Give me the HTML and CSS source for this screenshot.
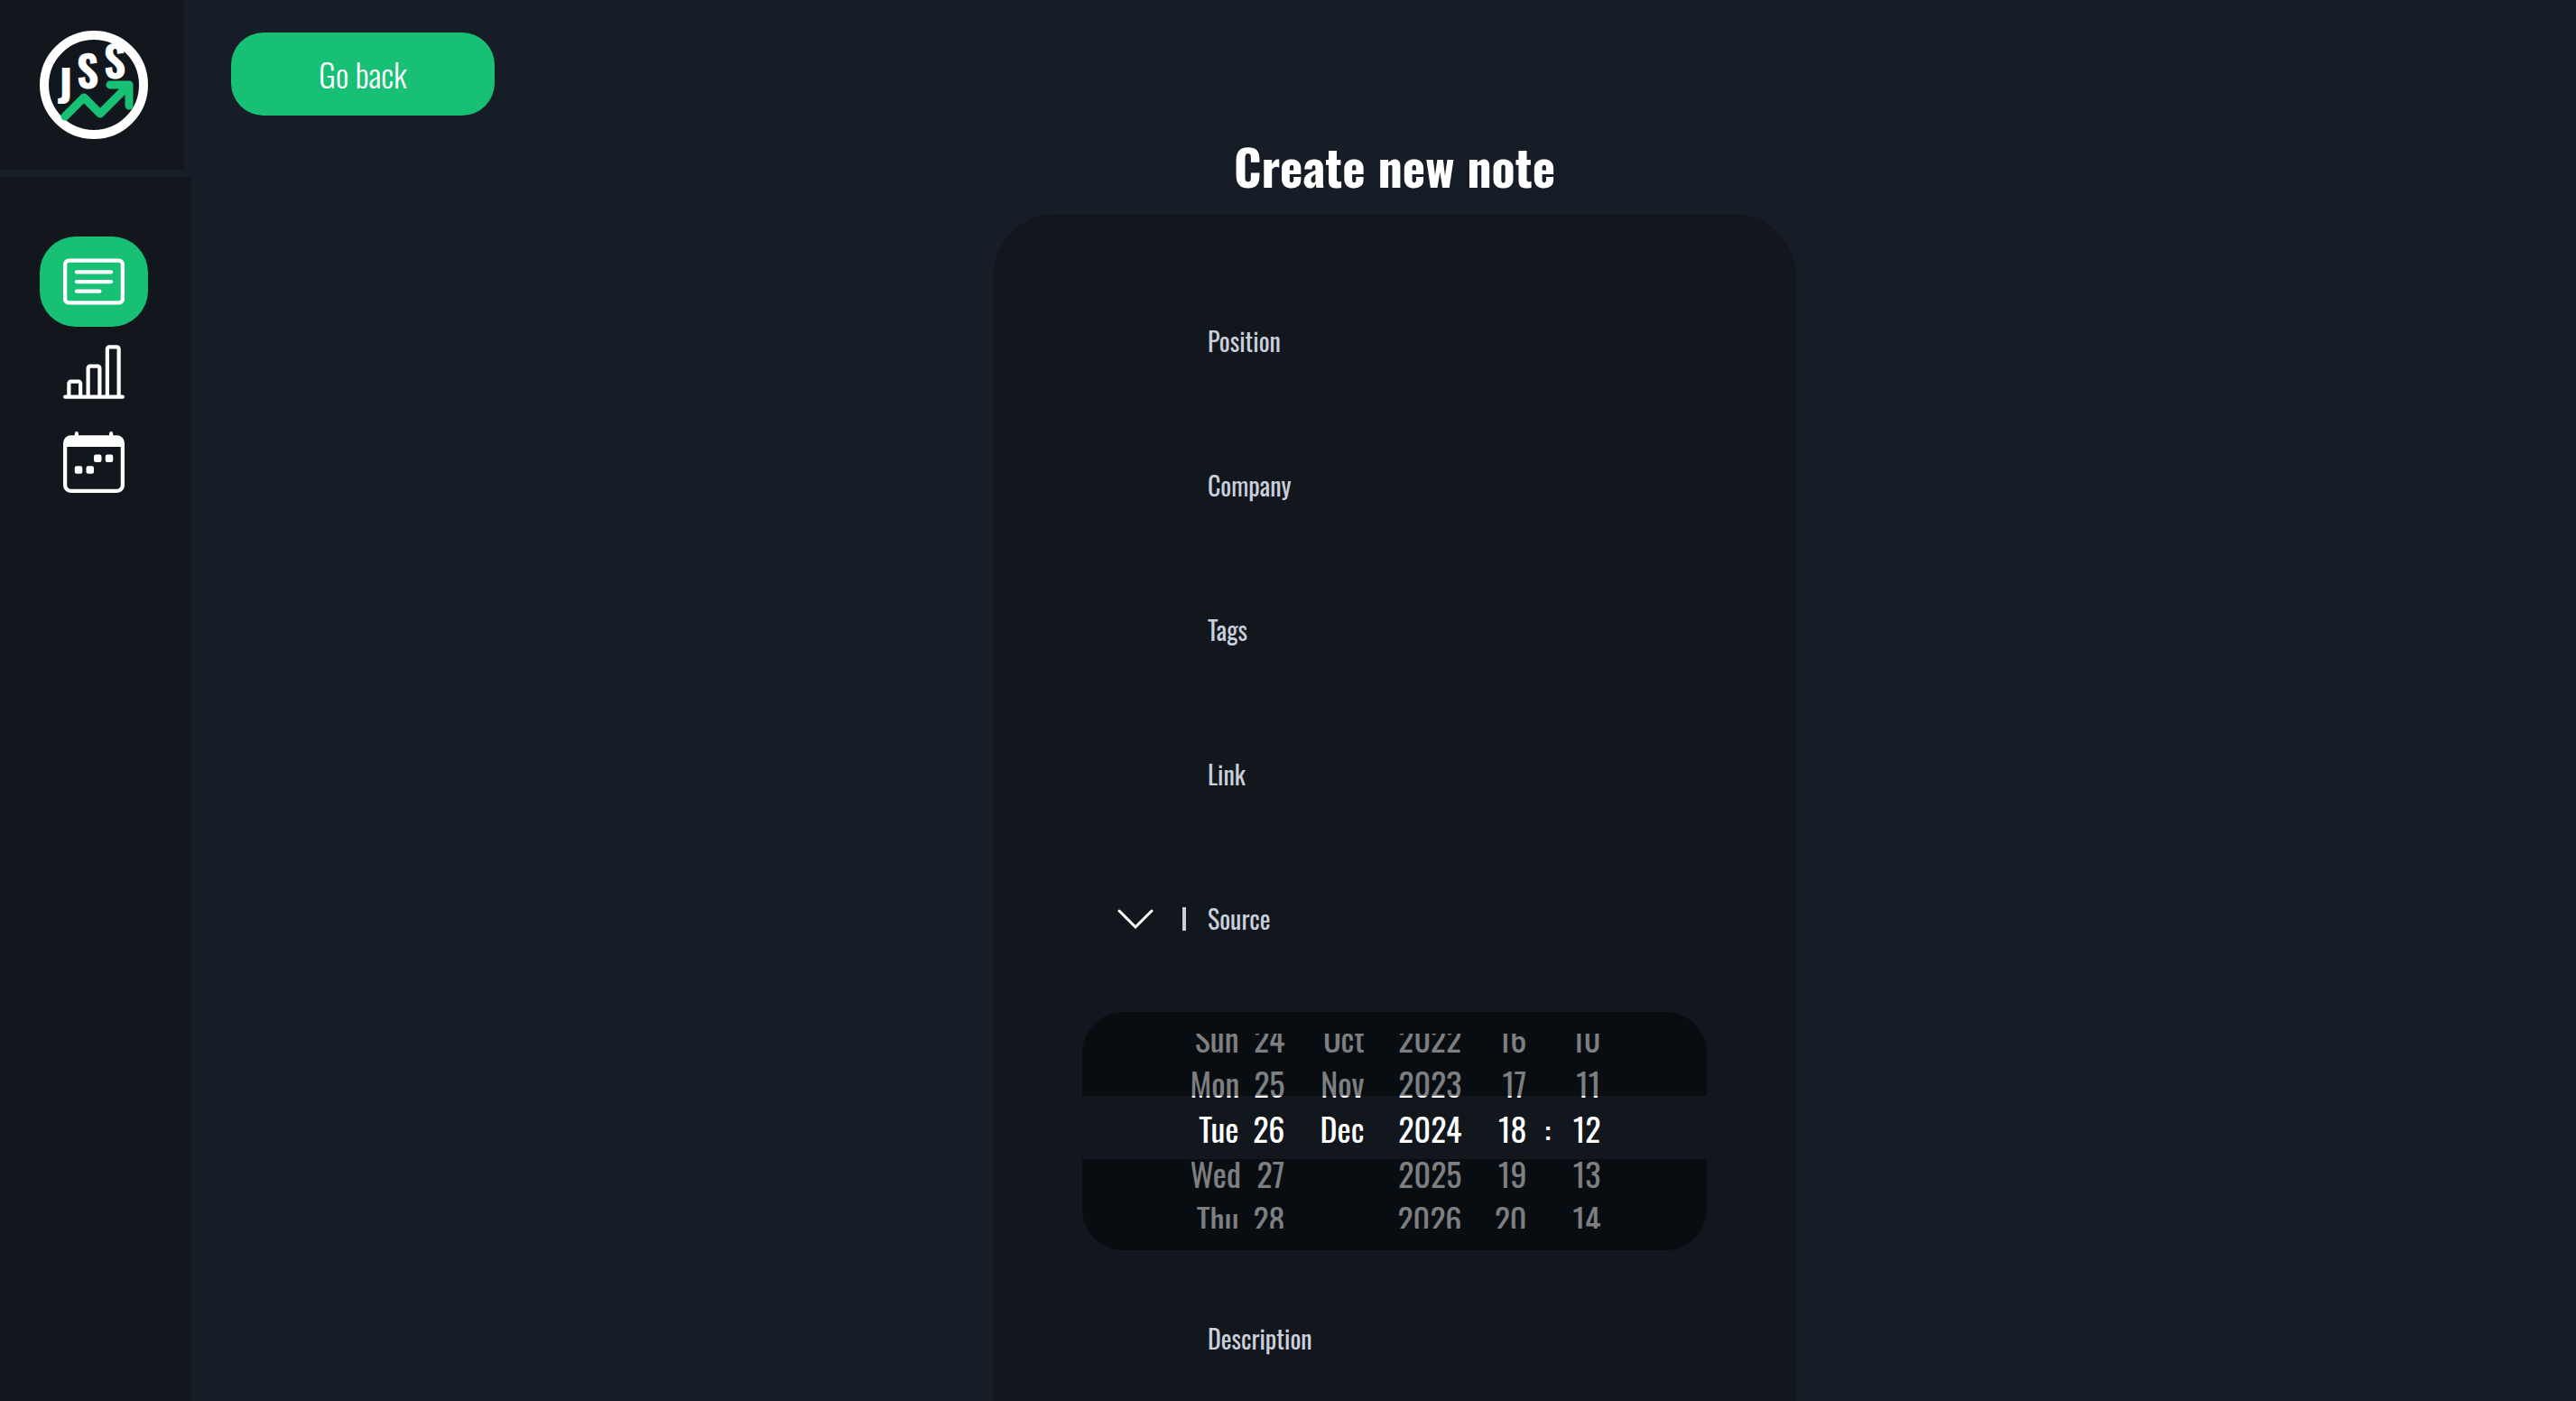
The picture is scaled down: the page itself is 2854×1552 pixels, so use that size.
FILE: index.html
```html
<!DOCTYPE html>
<html lang="en">
<head>
<meta charset="utf-8">
<meta name="viewport" content="width=device-width, initial-scale=1">
<title>Create new note</title>
<link rel="stylesheet" href="styles.css">
</head>
<body>
<div class="app">
  <aside class="sidebar">
    <a class="brand" href="#" aria-label="JSS home">
      <svg class="logo" viewBox="0 0 120 120" aria-hidden="true">
        <circle class="logo-ring" cx="60" cy="60" r="55"/>
        <g class="logo-text">
          <text x="28" y="80">J</text>
          <text x="53" y="64">S</text>
          <text x="83" y="53">S</text>
        </g>
        <path class="logo-arrow" d="M28 95 49 74 67 92 98 61M78 60H99V83"/>
      </svg>
    </a>
    <nav class="nav" aria-label="Main">
      <a class="nav-item active" href="#notes" aria-label="Notes">
        <svg class="icon" viewBox="0 0 16 16" aria-hidden="true"><path d="M14.5 3a.5.5 0 0 1 .5.5v9a.5.5 0 0 1-.5.5h-13a.5.5 0 0 1-.5-.5v-9a.5.5 0 0 1 .5-.5zm-13-1A1.500 1.500 0 0 0 0 3.500v9A1.500 1.500 0 0 0 1.500 14h13a1.500 1.500 0 0 0 1.500-1.500v-9A1.500 1.500 0 0 0 14.500 2z"/><path d="M3 5.500a.5.5 0 0 1 .5-.5h9a.5.5 0 0 1 0 1h-9a.5.5 0 0 1-.5-.5M3 8a.5.5 0 0 1 .5-.5h9a.5.5 0 0 1 0 1h-9A.5.5 0 0 1 3 8m0 2.500a.5.5 0 0 1 .5-.5h6a.5.5 0 0 1 0 1h-6a.5.5 0 0 1-.5-.5"/></svg>
      </a>
      <a class="nav-item" href="#stats" aria-label="Statistics">
        <svg class="icon" viewBox="0 0 16 16" aria-hidden="true"><path d="M11 2a1 1 0 0 1 1-1h2a1 1 0 0 1 1 1v12h.5a.5.5 0 0 1 0 1H.5a.5.5 0 0 1 0-1H1v-3a1 1 0 0 1 1-1h2a1 1 0 0 1 1 1v3h1V7a1 1 0 0 1 1-1h2a1 1 0 0 1 1 1v7h1zm1 12h2V2h-2zm-3 0V7H7v7zm-5 0v-3H2v3z"/></svg>
      </a>
      <a class="nav-item" href="#calendar" aria-label="Calendar">
        <svg class="icon" viewBox="0 0 16 16" aria-hidden="true"><path d="M11 6.500a.5.5 0 0 1 .5-.5h1a.5.5 0 0 1 .5.5v1a.5.5 0 0 1-.5.5h-1a.5.5 0 0 1-.5-.5zm-3 0a.5.5 0 0 1 .5-.5h1a.5.5 0 0 1 .5.5v1a.5.5 0 0 1-.5.5h-1a.5.5 0 0 1-.5-.5zm-5 3a.5.5 0 0 1 .5-.5h1a.5.5 0 0 1 .5.5v1a.5.5 0 0 1-.5.5h-1a.5.5 0 0 1-.5-.5zm3 0a.5.5 0 0 1 .5-.5h1a.5.5 0 0 1 .5.5v1a.5.5 0 0 1-.5.5h-1a.5.5 0 0 1-.5-.5z"/><path d="M3.500 0a.5.5 0 0 1 .5.5V1h8V.5a.5.5 0 0 1 1 0V1h1a2 2 0 0 1 2 2v11a2 2 0 0 1-2 2H2a2 2 0 0 1-2-2V3a2 2 0 0 1 2-2h1V.5a.5.5 0 0 1 .5-.5M1 4v10a1 1 0 0 0 1 1h12a1 1 0 0 0 1-1V4z"/></svg>
      </a>
    </nav>
  </aside>
  <main class="main">
    <button class="back" type="button">Go back</button>
    <h1 class="title">Create new note</h1>
    <form class="card">
      <div class="field"><label for="position">Position</label><input id="position" type="text"></div>
      <div class="field"><label for="company">Company</label><input id="company" type="text"></div>
      <div class="field"><label for="tags">Tags</label><input id="tags" type="text"></div>
      <div class="field"><label for="link">Link</label><input id="link" type="text"></div>
      <div class="field field-select">
        <svg class="chevron" viewBox="0 0 42 26" aria-hidden="true"><path d="M3 4 21 22 39 4"/></svg>
        <span class="divider"></span>
        <select aria-label="Source"><option>Source</option></select>
      </div>
      <div class="picker" role="group" aria-label="Date and time">
        <div class="wheels">
          <ul class="wheel weekday"><li>Sun</li><li>Mon</li><li>Tue</li><li>Wed</li><li>Thu</li></ul>
          <ul class="wheel day"><li>24</li><li>25</li><li>26</li><li>27</li><li>28</li></ul>
          <ul class="wheel month"><li>Oct</li><li>Nov</li><li>Dec</li></ul>
          <ul class="wheel year"><li>2022</li><li>2023</li><li>2024</li><li>2025</li><li>2026</li></ul>
          <ul class="wheel hour"><li>16</li><li>17</li><li>18</li><li>19</li><li>20</li></ul>
          <span class="colon">:</span>
          <ul class="wheel minute"><li>10</li><li>11</li><li>12</li><li>13</li><li>14</li></ul>
        </div>
      </div>
      <div class="field field-area"><label for="description">Description</label><textarea id="description"></textarea></div>
    </form>
  </main>
</div>
</body>
</html>
```
FILE: styles.css
```css
:root {
  --bg: #171d26;
  --panel: #12171e;
  --green: #18c076;
  --label: #c9d0dc;
}

* { box-sizing: border-box; }

body {
  margin: 0;
  background: var(--bg);
  color: #fff;
  font-family: Oswald, "Liberation Sans Narrow", "Roboto Condensed", Roboto, sans-serif;
}

button, input, select, textarea { font: inherit; color: inherit; }

.app { display: flex; min-height: 100vh; }

.sidebar {
  display: flex;
  flex: none;
  flex-direction: column;
  gap: 8px;
  width: 212px;
}

.brand {
  display: flex;
  align-items: center;
  justify-content: center;
  width: 204px;
  height: 188px;
  padding-left: 4px;
  background: var(--panel);
}

.logo { width: 120px; height: 120px; }
.logo-ring { fill: none; stroke: #fff; stroke-width: 10; }
.logo-text { fill: #fff; font-size: 48px; font-weight: 700; text-anchor: middle; }
.logo-arrow {
  fill: none;
  stroke: var(--green);
  stroke-width: 9;
  stroke-linecap: round;
  stroke-linejoin: round;
}

.nav {
  display: flex;
  flex: 1;
  flex-direction: column;
  padding: 66px 48px 0 44px;
  background: var(--panel);
}

.nav-item {
  display: flex;
  align-items: center;
  justify-content: center;
  height: 100px;
  border-radius: 40px;
  color: #fff;
}

.nav-item.active { background: var(--green); }
.icon { width: 68px; height: 68px; fill: currentColor; }

.main {
  display: flex;
  flex: 1;
  flex-direction: column;
  margin-left: 24px;
  padding-top: 36px;
}

.back {
  width: 292px;
  height: 92px;
  margin-left: 20px;
  padding: 0 0 2px;
  border: 0;
  border-radius: 36px;
  background: var(--green);
  font-size: 36px;
  font-weight: 300;
}

.title {
  margin: 18px 0 15px;
  font-size: 54px;
  font-weight: 700;
  line-height: 76px;
  text-align: center;
}

.card {
  flex: 1;
  width: 34%;
  margin: 0 auto;
  padding: 61px 99px 0;
  border-radius: 70px 70px 0 0;
  background: var(--panel);
}

.field {
  display: flex;
  align-items: center;
  gap: 16px;
  height: 160px;
  padding-left: 139px;
  color: var(--label);
  font-size: 28px;
}

.field label, .field select { padding: 0 0 2px; }

.field input, .field textarea, .field select {
  flex: 1;
  min-width: 0;
  height: 64px;
  border: 0;
  outline: 0;
  background: none;
  resize: none;
}

.field select { appearance: none; }
.field-select { gap: 0; padding-left: 38px; }

.chevron {
  width: 42px;
  height: 26px;
  fill: none;
  stroke: #fff;
  stroke-width: 3;
  stroke-linecap: round;
}

.divider {
  width: 4px;
  height: 26px;
  margin: 0 24px 0 31px;
  background: var(--label);
}

.picker {
  position: relative;
  margin-top: 23px;
  padding: 24px 0;
  border-radius: 46px;
  overflow: hidden;
  font-size: 36px;
}

.picker::before, .picker::after {
  content: "";
  position: absolute;
  left: 0;
  right: 0;
  background: rgba(0, 3, 5, 0.51);
  pointer-events: none;
}

.picker::before { top: 0; height: 93px; }
.picker::after { bottom: 0; height: 101px; }

.wheels {
  display: flex;
  align-items: center;
  justify-content: center;
  height: 216px;
  padding-left: 2px;
  overflow: hidden;
}

.wheel, .colon { margin: 0 0 6px; line-height: 50px; }

.wheel {
  height: 250px;
  padding: 0;
  list-style: none;
  text-align: right;
}

.weekday { width: 54px; }
.day { width: 51px; }
.month { width: 88px; }
.year { width: 108px; }
.hour { width: 72px; }
.colon { width: 46px; text-align: center; }
.minute { width: 36px; }

.field-area { height: 100px; margin-top: 48px; }
```
